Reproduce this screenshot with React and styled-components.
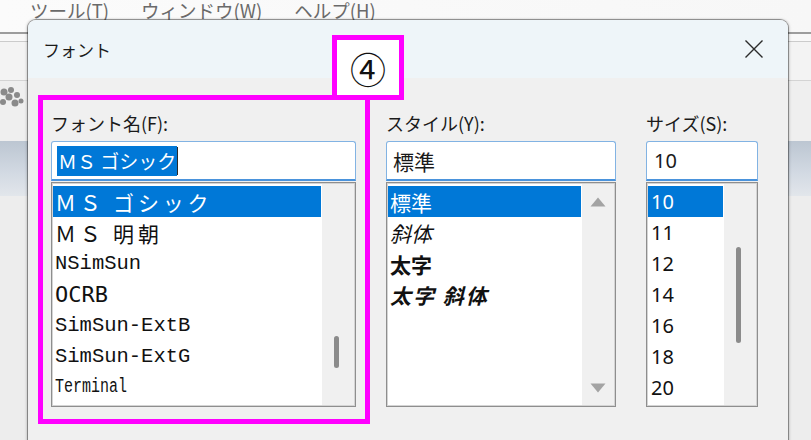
import React from 'react';
import styled, { createGlobalStyle } from 'styled-components';

const GlobalStyle = createGlobalStyle`
  html, body { margin: 0; padding: 0; }
  body {
    width: 811px;
    height: 440px;
    overflow: hidden;
    background: #eeeeee;
    font-family: "Noto Sans CJK JP", "Noto Sans", sans-serif;
  }
`;

const Screen = styled.div`
  position: relative;
  width: 811px;
  height: 440px;
  overflow: hidden;
  display: flex;
  flex-direction: column;
  background: #eeeeee;
`;

/* ---------- host application behind the dialog ---------- */

const MenuBar = styled.nav`
  flex: none;
  height: 32px;
  display: flex;
  gap: 32px;
  padding-left: 30px;
  background: linear-gradient(90deg, #fbfbfb, #f7f7f7);
  border-bottom: 2px solid #9d9d9d;
`;

const MenuItem = styled.span`
  font-size: 18.5px;
  line-height: 20px;
  margin-top: 0;
  color: #6a6a6a;
  white-space: nowrap;
`;

const Strip = styled.div`
  flex: none;
  height: ${(p) => p.$h}px;
  background: ${(p) => p.$bg};
  border-bottom: 1px solid ${(p) => p.$line};
`;

const ToolRow = styled.div`
  flex: none;
  height: 60px;
  display: flex;
  align-items: center;
  background: #efefef;
`;

const Band = styled.div`
  flex: none;
  height: 55px;
  background: linear-gradient(#bcc6d2, #d3dae3 60%, #e2e6eb);
`;

const Workspace = styled.div`
  flex: 1;
  background: #ededed;
`;

/* ---------- font dialog ---------- */

const Dialog = styled.section`
  position: absolute;
  left: 28px;
  top: 20px;
  width: 760px;
  height: 440px;
  border-radius: 8px 8px 0 0;
  background: #f0f0f0;
  box-shadow: 0 0 0 1px rgba(0, 0, 0, 0.3), -1px 0 3px rgba(0, 0, 0, 0.25),
    1px 0 3px rgba(0, 0, 0, 0.25);
  display: flex;
  flex-direction: column;
  overflow: hidden;
`;

const TitleBar = styled.header`
  flex: none;
  height: 58px;
  display: flex;
  align-items: center;
  justify-content: space-between;
  padding: 0 22px 0 15px;
  background: #eef5f9;
`;

const Title = styled.h1`
  margin: 0;
  font-size: 17px;
  font-weight: 400;
  color: #1b1b1b;
`;

const CloseButton = styled.button`
  width: 24px;
  height: 24px;
  padding: 0;
  border: none;
  background: none;
  display: flex;
  align-items: center;
  justify-content: center;
`;

const Body = styled.div`
  display: grid;
  grid-template-columns: 305px 230px 112px;
  column-gap: 30px;
  padding: 33px 0 0 23px;
`;

const Column = styled.div`
  display: flex;
  flex-direction: column;
`;

const Label = styled.label`
  font-size: 18px;
  line-height: 24px;
  margin-bottom: 6px;
  color: #1a1a1a;
  white-space: nowrap;
`;

const Field = styled.div`
  box-sizing: border-box;
  height: 40px;
  display: flex;
  align-items: center;
  padding-left: ${(p) => p.$pad}px;
  background: #fff;
  border: 1px solid #82b3e3;
  border-bottom: 2px solid #4a93dc;
  border-radius: 3px 3px 0 0;
  font-family: ${(p) => p.$family};
  font-size: ${(p) => p.$size}px;
  color: #1a1a1a;
`;

const Selection = styled.span`
  background: #0078d7;
  color: #fff;
  line-height: 30px;
  padding: 0 1px;
`;

const Caret = styled.span`
  width: 1px;
  height: 28px;
  background: #2a2a2a;
`;

const List = styled.div`
  box-sizing: border-box;
  margin-top: 1px;
  height: 225px;
  display: flex;
  background: #fff;
  border: 1px solid #8e8e8e;
  box-shadow: inset 0 0 0 1px #d4d4d4;
`;

const Items = styled.ul`
  flex: 1;
  margin: 0;
  padding: 3px 1px 0 1px;
  list-style: none;
  overflow: hidden;
`;

const Row = styled.li`
  height: 31px;
  display: flex;
  align-items: center;
  padding-left: ${(p) => p.$indent}px;
  white-space: nowrap;
  background: ${(p) => (p.$selected ? '#0078d7' : 'transparent')};
  color: ${(p) => (p.$selected ? '#fff' : '#111')};
`;

const ItemText = styled.span`
  display: inline-block;
  font-family: ${(p) => p.$family};
  font-size: ${(p) => p.$size}px;
  font-weight: ${(p) => (p.$bold ? 700 : 400)};
  font-style: ${(p) => (p.$italic ? 'italic' : 'normal')};
  letter-spacing: ${(p) => p.$track || 0}px;
  transform: scaleY(${(p) => p.$stretch || 1});
`;

const Track = styled.div`
  flex: none;
  width: 32px;
  margin: 1px 1px 1px 0;
  background: #f0f0f0;
  display: flex;
  flex-direction: column;
  justify-content: ${(p) => (p.$arrows ? 'space-between' : 'flex-start')};
  align-items: ${(p) => (p.$arrows ? 'center' : 'flex-start')};
  padding: ${(p) => (p.$arrows ? '13px 0 12px' : '0')};
  box-sizing: border-box;
`;

const Thumb = styled.div`
  width: 5px;
  margin-left: 12px;
  border-radius: 3px;
  background: #8b8b8b;
`;

const Arrow = styled.svg`
  display: block;
`;

/* ---------- annotation marks ---------- */

const Callout = styled.div`
  position: absolute;
  left: 38px;
  top: 95px;
  width: 332px;
  height: 329px;
  box-sizing: border-box;
  border: 5px solid #ff00ff;
  pointer-events: none;
`;

const CalloutTag = styled.div`
  position: absolute;
  left: 332px;
  top: 35px;
  width: 72px;
  height: 65px;
  box-sizing: border-box;
  border: 5px solid #ff00ff;
  background: #fff;
  display: flex;
  align-items: center;
  justify-content: center;
  font-size: 36px;
  line-height: 1;
  color: #111;
`;

const GOTHIC = '"Noto Sans CJK JP", sans-serif';
const MONO = '"Liberation Mono", monospace';
const DJMONO = '"DejaVu Sans Mono", monospace';
const LATIN = '"Noto Sans", "Noto Sans CJK JP", sans-serif';

const fonts = [
  { name: 'ＭＳ ゴシック', family: GOTHIC, size: 21, track: 3.8 },
  { name: 'ＭＳ 明朝', family: GOTHIC, size: 21, track: 3.8 },
  { name: 'NSimSun', family: MONO, size: 20.5 },
  { name: 'OCRB', family: DJMONO, size: 22 },
  { name: 'SimSun-ExtB', family: MONO, size: 20.5 },
  { name: 'SimSun-ExtG', family: MONO, size: 20.5 },
  { name: 'Terminal', family: MONO, size: 15, stretch: 1.3 },
];

const styles = [
  { name: '標準' },
  { name: '斜体', italic: true },
  { name: '太字', bold: true },
  { name: '太字 斜体', bold: true, italic: true, track: 2 },
];

const sizes = ['10', '11', '12', '14', '16', '18', '20'];

function ScrollBar({ top, length }) {
  return (
    <Track>
      <Thumb style={{ marginTop: top, height: length }} />
    </Track>
  );
}

function ArrowBar() {
  return (
    <Track $arrows>
      <Arrow width="16" height="10" viewBox="0 0 16 10">
        <path d="M8 0.5 L15.5 9.5 H0.5 Z" fill="#a3a3a3" />
      </Arrow>
      <Arrow width="16" height="10" viewBox="0 0 16 10">
        <path d="M0.5 0.5 H15.5 L8 9.5 Z" fill="#a3a3a3" />
      </Arrow>
    </Track>
  );
}

function ToolIcon() {
  return (
    <svg width="24" height="30" viewBox="0 0 24 30" style={{ marginTop: -20 }}>
      <g fill="#8a8a8a">
        <circle cx="4" cy="6" r="3.5" />
        <circle cx="11" cy="4" r="3" />
        <circle cx="9" cy="11" r="3.5" />
        <circle cx="17" cy="9" r="3" />
        <circle cx="3" cy="16" r="3" />
        <circle cx="15" cy="17" r="3.5" />
        <circle cx="21" cy="15" r="2.5" />
      </g>
    </svg>
  );
}

export default function App() {
  return (
    <Screen>
      <GlobalStyle />
      <MenuBar>
        <MenuItem>ツール(T)</MenuItem>
        <MenuItem>ウィンドウ(W)</MenuItem>
        <MenuItem>ヘルプ(H)</MenuItem>
      </MenuBar>
      <Strip $h={7} $bg="#f8f8f8" $line="#cbcbcb" />
      <Strip $h={38} $bg="#f3f3f3" $line="#d4d4d4" />
      <ToolRow>
        <ToolIcon />
      </ToolRow>
      <Band />
      <Workspace />

      <Dialog>
        <TitleBar>
          <Title>フォント</Title>
          <CloseButton aria-label="閉じる">
            <svg width="20" height="20" viewBox="0 0 20 20">
              <path d="M1.5 1.5 L18.5 18.5 M18.5 1.5 L1.5 18.5" stroke="#2b2b2b" strokeWidth="1.4" />
            </svg>
          </CloseButton>
        </TitleBar>
        <Body>
          <Column>
            <Label>フォント名(F):</Label>
            <Field $pad={5} $family={GOTHIC} $size={19}>
              <Selection>ＭＳ ゴシック</Selection>
              <Caret />
            </Field>
            <List>
              <Items>
                {fonts.map((f, i) => (
                  <Row key={f.name} $selected={i === 0} $indent={2}>
                    <ItemText $family={f.family} $size={f.size} $track={f.track} $stretch={f.stretch}>
                      {f.name}
                    </ItemText>
                  </Row>
                ))}
              </Items>
              <ScrollBar top={152} length={32} />
            </List>
          </Column>

          <Column>
            <Label>スタイル(Y):</Label>
            <Field $pad={6} $family={GOTHIC} $size={21}>
              標準
            </Field>
            <List>
              <Items>
                {styles.map((s, i) => (
                  <Row key={s.name} $selected={i === 0} $indent={2}>
                    <ItemText $family={GOTHIC} $size={21} $bold={s.bold} $italic={s.italic} $track={s.track}>
                      {s.name}
                    </ItemText>
                  </Row>
                ))}
              </Items>
              <ArrowBar />
            </List>
          </Column>

          <Column>
            <Label>サイズ(S):</Label>
            <Field $pad={7} $family={LATIN} $size={20}>
              10
            </Field>
            <List>
              <Items>
                {sizes.map((s, i) => (
                  <Row key={s} $selected={i === 0} $indent={3}>
                    <ItemText $family={LATIN} $size={20}>
                      {s}
                    </ItemText>
                  </Row>
                ))}
              </Items>
              <ScrollBar top={63} length={96} />
            </List>
          </Column>
        </Body>
      </Dialog>

      <Callout />
      <CalloutTag>④</CalloutTag>
    </Screen>
  );
}
